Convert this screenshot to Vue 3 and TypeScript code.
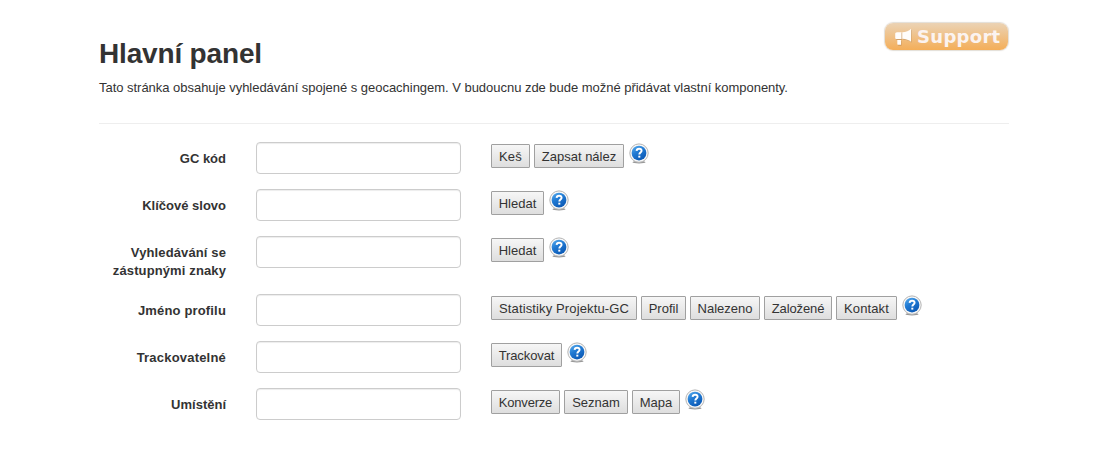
<script setup lang="ts">
interface Action { text: string; width: number; spacing?: number }
interface Row { id: string; label: string; spacing: number; actions: Action[] }

const rows: Row[] = [
  { id: 'code', label: 'GC kód', spacing: 0, actions: [{ text: 'Keš', width: 39, spacing: 0.2 }, { text: 'Zapsat nález', width: 90 }] },
  { id: 'keyword', label: 'Klíčové slovo', spacing: 0, actions: [{ text: 'Hledat', width: 53 }] },
  { id: 'wildcard', label: 'Vyhledávání se zástupnými znaky', spacing: 0.12, actions: [{ text: 'Hledat', width: 53 }] },
  {
    id: 'profile', label: 'Jméno profilu', spacing: 0.16, actions: [
      { text: 'Statistiky Projektu-GC', width: 146, spacing: 0.13 },
      { text: 'Profil', width: 45 },
      { text: 'Nalezeno', width: 70 },
      { text: 'Založené', width: 68, spacing: -0.1 },
      { text: 'Kontakt', width: 61, spacing: 0.1 },
    ],
  },
  { id: 'trackable', label: 'Trackovatelné', spacing: 0.2, actions: [{ text: 'Trackovat', width: 71, spacing: -0.1 }] },
  { id: 'location', label: 'Umístění', spacing: 0, actions: [{ text: 'Konverze', width: 69, spacing: -0.2 }, { text: 'Seznam', width: 64 }, { text: 'Mapa', width: 48 }] },
]
</script>

<template>
  <main class="page">
    <header class="head">
      <div>
        <h1>Hlavní panel</h1>
        <p>Tato stránka obsahuje vyhledávání spojené s geocachingem. V budoucnu zde bude možné přidávat vlastní komponenty.</p>
      </div>
      <a class="support">
        <svg class="horn" width="18" height="18" viewBox="0 0 18 18">
          <path class="horn-shadow" transform="translate(.6 .9)" d="M3 4.200H7.500V11H2.500C1.700 11 1.200 10.500 1.200 9.700V6C1.200 4.900 1.900 4.200 3 4.200zM8.300 4.200C12 4.200 15 2.800 17 .8V13.800C15 12 12 10.700 8.300 10.700zM3.300 11.900H7V16.800H4.300C3.600 16.800 3.300 16.400 3.300 15.800z" />
          <path class="horn-body" d="M3 4.200H7.500V11H2.500C1.700 11 1.200 10.500 1.200 9.700V6C1.200 4.900 1.900 4.200 3 4.200zM8.300 4.200C12 4.200 15 2.800 17 .8V13.800C15 12 12 10.700 8.300 10.700zM3.300 11.900H7V16.800H4.300C3.600 16.800 3.300 16.400 3.300 15.800z" />
        </svg>
        <span>Support</span>
      </a>
    </header>
    <form class="form" @submit.prevent>
      <div v-for="row in rows" :key="row.id" class="row">
        <label :for="row.id" :style="{ letterSpacing: row.spacing + 'px' }">{{ row.label }}</label>
        <input :id="row.id" type="text">
        <div class="actions">
          <button
            v-for="a in row.actions"
            :key="a.text"
            type="button"
            :style="{ width: a.width + 'px', letterSpacing: (a.spacing ?? 0) + 'px' }"
          >{{ a.text }}</button>
          <svg class="help" width="22" height="22" viewBox="0 0 22 22">
            <defs>
              <linearGradient :id="'blue-' + row.id" x1="0" y1="0" x2=".6" y2="1">
                <stop offset="0" stop-color="#5aaff0" />
                <stop offset=".5" stop-color="#2079d2" />
                <stop offset="1" stop-color="#0c5ab6" />
              </linearGradient>
            </defs>
            <ellipse cx="11" cy="19.200" rx="6.500" ry="1.200" fill="#444" opacity=".55" />
            <circle cx="11" cy="10.100" r="9.200" fill="#f7f7f7" stroke="#b5b5b5" />
            <circle cx="11" cy="10.100" r="7.400" :fill="`url(#blue-${row.id})`" />
            <path d="M8.600 7.900C8.700 6.400 9.700 5.800 11.100 5.800c1.500 0 2.500.8 2.500 2 0 1.700-2.300 1.900-2.300 3.800" fill="none" stroke="#fff" stroke-width="1.900" />
            <rect x="10.300" y="12.700" width="2" height="1.900" fill="#fff" />
          </svg>
        </div>
      </div>
    </form>
  </main>
</template>

<style>
html, body { background: #fff; overflow: hidden; }
</style>
<style scoped>
.page {
  width: 910px;
  margin-left: 99px;
  font: 13px/18px "Liberation Sans", Arial, sans-serif;
  color: #333;
}
.head {
  box-sizing: border-box;
  height: 124px;
  padding-top: 22px;
  display: flex;
  justify-content: space-between;
  align-items: flex-start;
  border-bottom: 1px solid #eee;
}
h1 { margin: 14px 0 0; font-size: 28px; line-height: 36px; letter-spacing: -.17px; white-space: nowrap; }
p { margin: 7px 0 0; letter-spacing: -.028px; white-space: nowrap; }
.support {
  box-sizing: border-box;
  width: 123px;
  height: 27px;
  margin: 1px 1px 0 0;
  display: flex;
  align-items: center;
  padding-left: 9px;
  border-radius: 8px;
  background: linear-gradient(#ebd3b5, #f4ae59);
  box-shadow: 0 0 1px 1px rgba(190, 180, 165, .45);
  color: #fbf3f0;
  font: bold 18px/25px "DejaVu Sans", sans-serif;
  letter-spacing: .3px;
}
.horn { flex: none; margin: 0 5px 0 0; }
.horn-shadow { fill: #9c7650; opacity: .4; }
.horn-body { fill: #fffdfb; }
.form { margin-top: 18px; }
.row { display: flex; align-items: flex-start; margin-bottom: 15px; }
label {
  box-sizing: border-box;
  width: 127px;
  padding-top: 8px;
  margin: 0 30px -1px 0;
  text-align: right;
  font-weight: bold;
}
input {
  box-sizing: border-box;
  width: 205px;
  height: 32px;
  border: 1px solid #ccc;
  border-radius: 4px;
  box-shadow: inset 0 1px 1px rgba(0, 0, 0, .075);
  background: #fff;
}
.actions { display: flex; gap: 4px; margin: 2px 0 0 30px; }
button {
  box-sizing: border-box;
  flex: none;
  height: 24px;
  padding: 2px 0 0;
  border: 1px solid #a0a0a0;
  border-radius: 1px;
  background: linear-gradient(#f6f6f6, #dedede);
  color: #333;
  font: 13px/20px "Liberation Sans", Arial, sans-serif;
  white-space: nowrap;
}
.help { display: block; margin-top: -1px; }
</style>
